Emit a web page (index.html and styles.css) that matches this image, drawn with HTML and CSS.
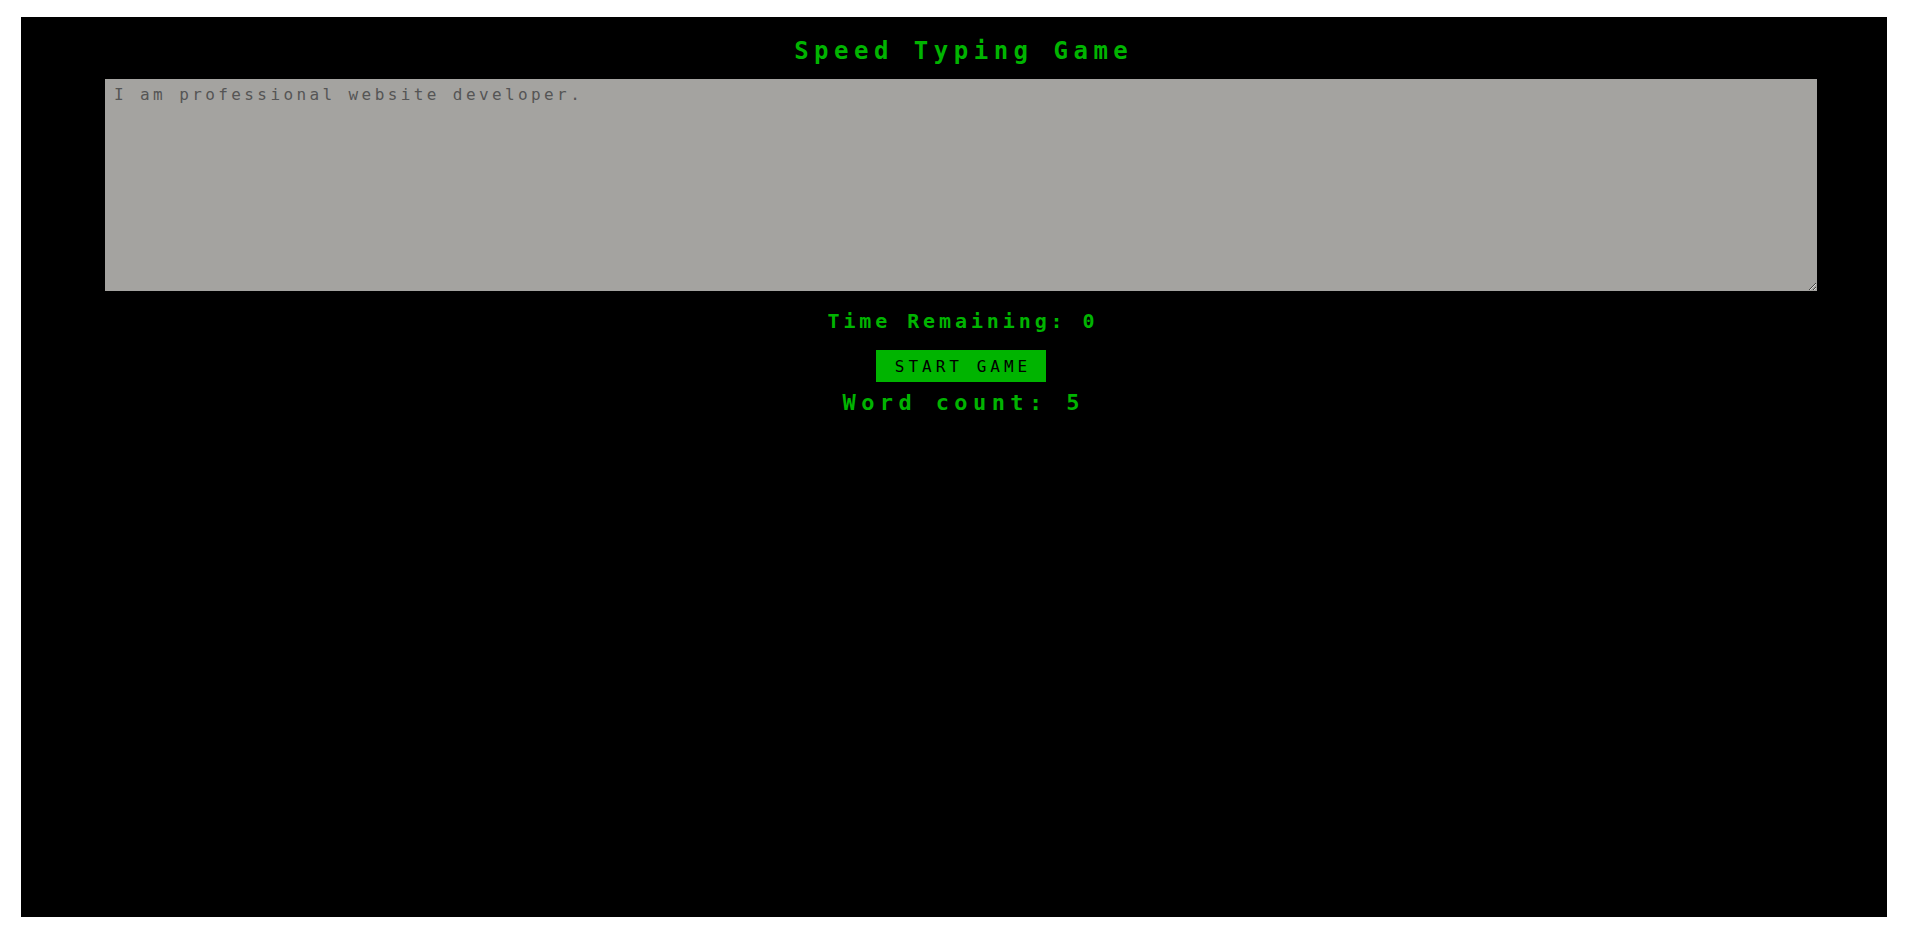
FILE: index.html
```html
<!DOCTYPE html>
<html>
<head>
<meta charset="utf-8">
<title>Speed Typing Game</title>
<link rel="stylesheet" href="styles.css">
</head>
<body>
<main class="game">
  <div class="column">
    <h1 class="title">Speed Typing Game</h1>
    <textarea class="typing-area">I am professional website developer.</textarea>
    <h4 class="timer">Time Remaining: 0</h4>
    <button class="start-btn">START GAME</button>
    <h1 class="word-count">Word count: 5</h1>
  </div>
</main>
</body>
</html>
```
FILE: styles.css
```css
html, body {
  margin: 0;
  background: #ffffff;
}
body {
  padding: 17px 19px 16px 21px;
  font-family: "DejaVu Sans Mono", "Liberation Mono", monospace;
}
.game {
  background: #000000;
  width: 1866px;
  height: 900px;
  box-sizing: border-box;
  padding: 0 70px 0 84px;
}
.column {
  display: flex;
  flex-direction: column;
  align-items: center;
}
.title {
  margin: 22px 0 0;
  font-size: 24px;
  line-height: 24px;
  font-weight: bold;
  letter-spacing: 5.5px;
  padding-left: 5.5px;
  color: #00b400;
}
.typing-area {
  margin-top: 16px;
  width: 1712px;
  height: 212px;
  box-sizing: border-box;
  border: none;
  outline: none;
  padding: 6px 9px;
  background: #a4a3a0;
  color: #555555;
  font-family: "DejaVu Sans Mono", "Liberation Mono", monospace;
  font-size: 16px;
  letter-spacing: 3.4px;
}
.timer {
  margin: 20px 0 0;
  font-size: 20px;
  line-height: 20px;
  font-weight: bold;
  letter-spacing: 3.9px;
  padding-left: 3.9px;
  color: #00b400;
}
.start-btn {
  margin-top: 19px;
  width: 170px;
  height: 32px;
  border: none;
  background: #00b400;
  color: #000000;
  font-family: "DejaVu Sans Mono", "Liberation Mono", monospace;
  font-size: 16px;
  letter-spacing: 4px;
  padding: 0 0 0 4px;
}
.word-count {
  margin: 10px 0 0;
  font-size: 22px;
  line-height: 22px;
  font-weight: bold;
  letter-spacing: 5.4px;
  padding-left: 5.4px;
  color: #00b400;
}
```
